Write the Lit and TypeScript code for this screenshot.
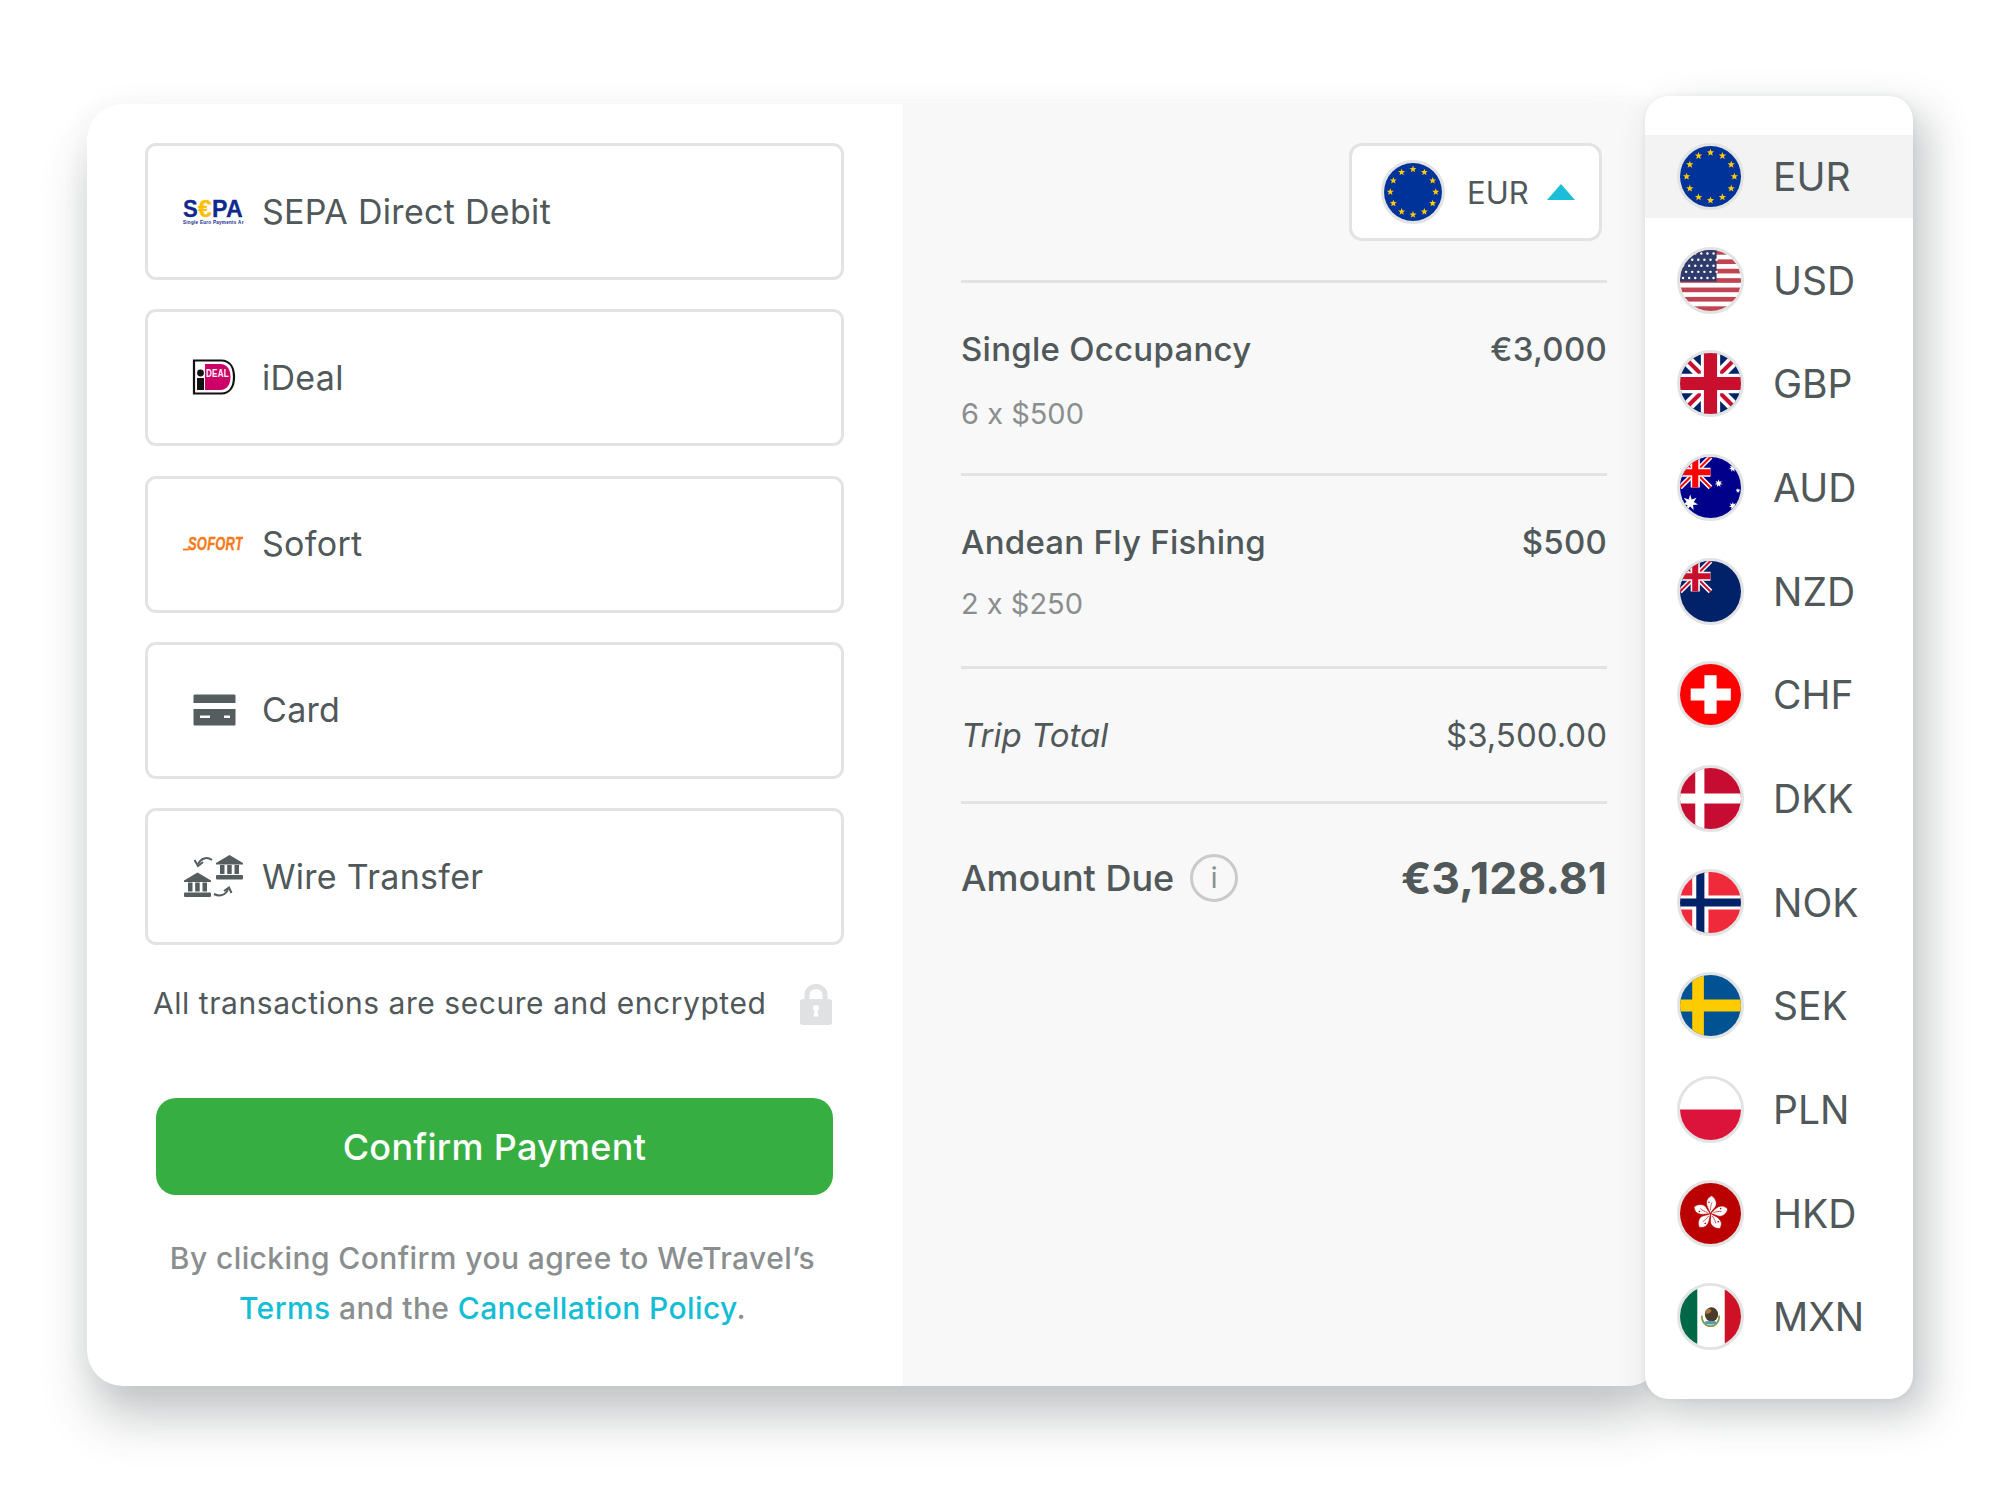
import { LitElement, css, html, svg } from "lit";
import { customElement, property } from "lit/decorators.js";

const star = (cx: number, cy: number, r: number, points = 5, inner = 0.42) => {
  const pts: string[] = [];
  for (let i = 0; i < points * 2; i++) {
    const a = (Math.PI * i) / points - Math.PI / 2;
    const d = i % 2 ? r * inner : r;
    pts.push(`${(cx + d * Math.cos(a)).toFixed(2)},${(cy + d * Math.sin(a)).toFixed(2)}`);
  }
  return pts.join(" ");
};

const ukCanton = (blue: string, red: string) => svg`
  <rect width="30" height="30" fill=${blue}></rect>
  <path d="M0 0L30 30M30 0L0 30" stroke="#fff" stroke-width="5"></path>
  <path d="M0 0L30 30M30 0L0 30" stroke=${red} stroke-width="2"></path>
  <path d="M15 0V30M0 15H30" stroke="#fff" stroke-width="9"></path>
  <path d="M15 0V30M0 15H30" stroke=${red} stroke-width="6"></path>
`;

const eu = () => {
  const stars = [];
  for (let i = 0; i < 12; i++) {
    const a = (Math.PI * i) / 6;
    stars.push(svg`<polygon points=${star(30 + 23.5 * Math.sin(a), 30 - 23.5 * Math.cos(a), 3.8)} fill="#ffcc00"></polygon>`);
  }
  return svg`<rect width="60" height="60" fill="#003399"></rect>${stars}`;
};

const us = () => {
  const stripes = [];
  for (let i = 0; i < 7; i++) {
    stripes.push(svg`<rect y=${i * 9.23} width="60" height="4.6" fill="#bf4553"></rect>`);
  }
  const dots = [];
  for (let r = 0; r < 5; r++) {
    for (let c = 0; c < 6; c++) {
      dots.push(svg`<circle cx=${3 + c * 6 + (r % 2 ? 3 : 0)} cy=${3.5 + r * 6} r="1.2" fill="#fff"></circle>`);
    }
  }
  return svg`<rect width="60" height="60" fill="#fff"></rect>${stripes}
    <rect width="36" height="31" fill="#2f3a6d"></rect>${dots}`;
};

const gb = () => svg`
  <rect width="60" height="60" fill="#012169"></rect>
  <path d="M0 0L60 60M60 0L0 60" stroke="#fff" stroke-width="11"></path>
  <path d="M0 0L60 60M60 0L0 60" stroke="#c8102e" stroke-width="4"></path>
  <path d="M30 0V60M0 30H60" stroke="#fff" stroke-width="19"></path>
  <path d="M30 0V60M0 30H60" stroke="#c8102e" stroke-width="13"></path>
`;

const au = () => svg`
  <rect width="60" height="60" fill="#00008b"></rect>
  ${ukCanton("#00008b", "#ff0000")}
  <polygon points=${star(10, 45, 8, 7, 0.45)} fill="#fff"></polygon>
  <polygon points=${star(38, 26, 4, 7, 0.45)} fill="#fff"></polygon>
  <polygon points=${star(52, 11, 4, 7, 0.45)} fill="#fff"></polygon>
  <polygon points=${star(57, 33, 2.5, 7, 0.45)} fill="#fff"></polygon>
  <polygon points=${star(52, 48, 4, 7, 0.45)} fill="#fff"></polygon>
`;

const nz = () => svg`
  <rect width="60" height="60" fill="#012169"></rect>
  ${ukCanton("#012169", "#c8102e")}
`;

const ch = () => svg`
  <rect width="60" height="60" fill="#ff0000"></rect>
  <path d="M24 11H36V24H50V36H36V49H24V36H10.5V24H24Z" fill="#fff"></path>
`;

const dk = () => svg`
  <rect width="60" height="60" fill="#c60c30"></rect>
  <path d="M15 0H24V25H60V35H24V60H15V35H0V25H15Z" fill="#fff"></path>
`;

const no = () => svg`
  <rect width="60" height="60" fill="#ef2b3b"></rect>
  <path d="M12 0H28V23H60V37H28V60H12V37H0V23H12Z" fill="#fff"></path>
  <path d="M16 0H24V26H60V34H24V60H16V34H0V26H16Z" fill="#012169"></path>
`;

const se = () => svg`
  <rect width="60" height="60" fill="#005293"></rect>
  <path d="M12 0H23.5V24H60V36H23.5V60H12V36H0V24H12Z" fill="#fecb00"></path>
`;

const pl = () => svg`
  <rect width="60" height="60" fill="#fff"></rect>
  <rect y="30" width="60" height="30" fill="#dc143c"></rect>
`;

const hk = () => {
  const petals = [];
  for (let i = 0; i < 5; i++) {
    petals.push(svg`<g transform="rotate(${i * 72} 30 30)">
      <path d="M30 30C28.500 26 25 22 26.500 17C27.200 14.700 29.500 13.500 31 12.500C34.500 14.500 36.500 18.500 35.500 22C34.500 25 32 26 30 30Z" fill="#fff" stroke="#ba0000" stroke-width=".6"></path>
      <path d="M30 27C30 24 30.500 21 31.500 19" stroke="#ba0000" stroke-width=".6" fill="none"></path>
      <circle cx="28.500" cy="19" r=".8" fill="#ba0000"></circle>
    </g>`);
  }
  return svg`<rect width="60" height="60" fill="#ba0000"></rect>${petals}`;
};

const mx = () => svg`
  <rect width="60" height="60" fill="#fff"></rect>
  <rect width="17" height="60" fill="#006847"></rect>
  <rect x="44" width="16" height="60" fill="#ce1126"></rect>
  <path d="M21.500 29C21 35 25 39.500 30 39.500C35 39.500 39 35 38.500 29" fill="none" stroke="#8a9a4a" stroke-width="1.600"></path>
  <ellipse cx="31" cy="28" rx="6.500" ry="7" fill="#4a3a2a"></ellipse>
  <path d="M25 24C27 22 30 22 31 24C30 27 27 28 25 27Z" fill="#a8773a"></path>
  <ellipse cx="30" cy="36" rx="6" ry="1.800" fill="#4f9fb0"></ellipse>
`;

const flags: Record<string, () => unknown> = {
  EUR: eu, USD: us, GBP: gb, AUD: au, NZD: nz, CHF: ch,
  DKK: dk, NOK: no, SEK: se, PLN: pl, HKD: hk, MXN: mx,
};

@customElement("app-flag")
export class AppFlag extends LitElement {
  static styles = css`
    :host {
      display: block;
      flex: none;
      width: 67px;
      height: 67px;
    }
    :host([small]) {
      width: 64px;
      height: 64px;
    }
    svg {
      display: block;
      width: 100%;
      height: 100%;
      box-sizing: border-box;
      border: 3px solid #e2e3e3;
      border-radius: 50%;
    }
  `;

  @property({ type: String })
  code = "EUR";

  render() {
    return html`<svg viewBox="0 0 60 60">${flags[this.code]()}</svg>`;
  }
}

const sepaLogo = html`<svg class="logo sepa" width="62" height="34" viewBox="-1 -6 62 34">
  <g font-family="Liberation Sans" font-weight="700" font-size="24" stroke-width=".3">
    <text x="0" y="17" fill="#10298e" stroke="#10298e" textLength="15" lengthAdjust="spacingAndGlyphs">S</text>
    <text x="15" y="17" fill="#ffbe00" stroke="#ffbe00" textLength="14" lengthAdjust="spacingAndGlyphs">€</text>
    <text x="29" y="17" fill="#10298e" stroke="#10298e" textLength="31" lengthAdjust="spacingAndGlyphs">PA</text>
  </g>
  <text transform="translate(0 23.5) scale(.915 1)" font-family="Liberation Sans" font-weight="700" font-size="5" fill="#10298e">Single Euro Payments Area</text>
</svg>`;

const idealLogo = html`<svg class="logo" width="60" height="36" viewBox="0 0 60 36">
  <path d="M11 1.500H38C48 1.500 51 10 51 18C51 26 48 34.500 38 34.500H11Z" fill="#fff" stroke="#111" stroke-width="2.200"></path>
  <path d="M22 5H37C45 5 47.500 12 47.500 18C47.500 24 45 31 37 31H22Z" fill="#cc0066"></path>
  <circle cx="17.500" cy="14" r="3.400" fill="#111"></circle>
  <rect x="14" y="19" width="7" height="12" fill="#111"></rect>
  <text x="23" y="17.500" font-family="Liberation Sans" font-weight="700" font-size="10.500" fill="#fff" textLength="23" lengthAdjust="spacingAndGlyphs">DEAL</text>
</svg>`;

const sofortLogo = html`<svg class="logo" width="60" height="24" viewBox="0 -4 60 24">
  <text transform="translate(5 14) scale(.72 1)" font-family="Liberation Sans" font-style="italic" font-weight="700" font-size="18" fill="#f47a1c" stroke="#f47a1c" stroke-width=".4">SOFORT</text>
  <path d="M0 13.500H6" stroke="#f47a1c" stroke-width="1.800"></path>
</svg>`;

const cardIcon = html`<svg class="logo" width="60" height="32" viewBox="0 0 60 32">
  <path d="M10.500 2C10.500 1 11 .5 12 .5H51C52 .5 52.500 1 52.500 2V9H10.500Z" fill="#555d5f"></path>
  <path d="M10.500 15H52.500V30C52.500 31 52 31.500 51 31.500H12C11 31.500 10.500 31 10.500 30Z" fill="#555d5f"></path>
  <rect x="17" y="21.500" width="10" height="2.500" fill="#fff"></rect>
  <rect x="41" y="21.500" width="6" height="2.500" fill="#fff"></rect>
</svg>`;

const bank = (x: number, y: number) => svg`
  <path d="M${x} ${y + 8}L${x + 13.5} ${y}L${x + 27} ${y + 8}V${y + 9.5}H${x}Z" fill="#555d5f"></path>
  <rect x=${x + 4} y=${y + 10} width="4.500" height="9" fill="#555d5f"></rect>
  <rect x=${x + 11.2} y=${y + 10} width="4.500" height="9" fill="#555d5f"></rect>
  <rect x=${x + 18.5} y=${y + 10} width="4.500" height="9" fill="#555d5f"></rect>
  <rect x=${x} y=${y + 20} width="27" height="4.500" rx="1" fill="#555d5f"></rect>
`;

const wireIcon = html`<svg class="logo" width="60" height="43" viewBox="0 0 60 43">
  ${bank(33, 0)}${bank(1, 17.5)}
  <path d="M29 5C24 1.500 18 3 15 9" fill="none" stroke="#555d5f" stroke-width="2"></path>
  <path d="M11.500 5L15 11L20 7" fill="none" stroke="#555d5f" stroke-width="2"></path>
  <path d="M31 39C37 42 43 40 45 34" fill="none" stroke="#555d5f" stroke-width="2"></path>
  <path d="M41 36L46 32.500L48.500 38" fill="none" stroke="#555d5f" stroke-width="2"></path>
</svg>`;

const lockIcon = html`<svg class="lock" width="32" height="41" viewBox="0 0 32 41">
  <path d="M7 18V11C7 6 11 2.500 16 2.500C21 2.500 25 6 25 11V18" fill="none" stroke="#dfe1e3" stroke-width="5"></path>
  <rect y="15" width="32" height="26" rx="3" fill="#dfe1e3"></rect>
  <circle cx="16" cy="24" r="3" fill="#fff"></circle>
  <path d="M14.800 25H17.200L18.500 32.500H13.500Z" fill="#fff"></path>
</svg>`;

const methods = [
  { label: "SEPA Direct Debit", logo: sepaLogo },
  { label: "iDeal", logo: idealLogo },
  { label: "Sofort", logo: sofortLogo },
  { label: "Card", logo: cardIcon },
  { label: "Wire Transfer", logo: wireIcon },
];

const currencies = ["EUR", "USD", "GBP", "AUD", "NZD", "CHF", "DKK", "NOK", "SEK", "PLN", "HKD", "MXN"];

@customElement("app-root")
export class AppRoot extends LitElement {
  static styles = css`
    :host {
      display: block;
      width: 2000px;
      height: 1494px;
      font-family: Inter, "Liberation Sans", sans-serif;
      color: #50585a;
    }
    .page {
      position: relative;
      box-sizing: border-box;
      width: 2000px;
      height: 1494px;
      padding: 104px 0 0 87px;
      background: #fff;
    }
    .card {
      display: flex;
      width: 1576px;
      height: 1282px;
      border-radius: 36px;
      background: #fff;
      box-shadow: 0 36px 50px -6px rgba(55, 62, 66, 0.3), 0 0 30px rgba(55, 62, 66, 0.05);
      overflow: hidden;
    }
    .pay {
      box-sizing: border-box;
      flex: none;
      width: 816px;
      padding: 39px 59px 0 58px;
    }
    .methods {
      display: flex;
      flex-direction: column;
      gap: 29.25px;
    }
    .method {
      display: flex;
      align-items: center;
      gap: 19px;
      box-sizing: border-box;
      height: 137px;
      padding: 0 0 1px 35px;
      border: 3px solid #e2e3e3;
      border-radius: 11px;
      font-size: 34px;
      letter-spacing: 0.3px;
    }
    .logo {
      display: block;
      flex: none;
    }
    .logo.sepa {
      margin: 0 -1px;
    }
    .secure {
      display: flex;
      align-items: center;
      justify-content: space-between;
      height: 50px;
      margin-top: 33px;
      padding: 0 12px 0 8px;
      font-size: 30px;
      letter-spacing: 0.55px;
    }
    .lock {
      display: block;
      margin-top: 3px;
    }
    button {
      display: block;
      width: 677px;
      height: 97px;
      margin: 70px 0 0 11px;
      border: 0;
      border-radius: 20px;
      background: #36ae41;
      color: #fff;
      font: 500 36px Inter, "Liberation Sans", sans-serif;
      letter-spacing: 0.3px;
    }
    .terms {
      margin: 38px 1px 0 -3px;
      font-size: 30px;
      font-weight: 500;
      letter-spacing: 0.4px;
      line-height: 50px;
      text-align: center;
      color: #8b8e8f;
    }
    .terms a {
      color: #14bdd6;
      text-decoration: none;
    }
    .summary {
      box-sizing: border-box;
      flex: 1;
      padding: 39px 56px 0 58px;
      background: #f8f8f8;
    }
    .select {
      display: flex;
      align-items: center;
      box-sizing: border-box;
      width: 253px;
      height: 98px;
      margin: 0 5px 39px auto;
      padding-left: 29px;
      border: 3px solid #e2e3e3;
      border-radius: 13px;
      background: #fff;
      font-size: 31px;
    }
    .select span {
      margin: 0 18px 0 22px;
    }
    .arrow {
      display: block;
    }
    .line {
      box-sizing: border-box;
      height: 193px;
      padding-top: 41px;
      border-top: 3px solid #e2e3e3;
    }
    .row {
      display: flex;
      justify-content: space-between;
      align-items: center;
      height: 50px;
      font-size: 33px;
      font-weight: 500;
      letter-spacing: 0.25px;
    }
    .sub {
      margin-top: 15px;
      font-size: 29px;
      line-height: 50px;
      color: #8b8e8f;
    }
    .line + .line .sub {
      margin-top: 12px;
    }
    .total {
      height: 135px;
    }
    .total .row {
      font-weight: 400;
      letter-spacing: 0;
    }
    .total .row span:first-child {
      font-style: italic;
    }
    .due {
      padding-top: 49px;
      border-top: 3px solid #e2e3e3;
    }
    .due .row {
      height: 50px;
      font-size: 36px;
      letter-spacing: 0;
    }
    .label {
      display: flex;
      align-items: center;
      gap: 16px;
    }
    .info {
      display: flex;
      align-items: center;
      justify-content: center;
      box-sizing: border-box;
      width: 48px;
      height: 48px;
      border: 3px solid #c9cbcb;
      border-radius: 50%;
      color: #8b8e8f;
      font-size: 28px;
      font-weight: 400;
    }
    .amount {
      font-size: 44.5px;
      font-weight: 700;
    }
    .menu {
      position: absolute;
      top: 96px;
      left: 1645px;
      box-sizing: border-box;
      display: flex;
      flex-direction: column;
      gap: 20.67px;
      width: 268px;
      height: 1303px;
      padding: 39px 0 0;
      border-radius: 24px;
      background: #fff;
      box-shadow: 16px 16px 40px rgba(55, 62, 66, 0.28), 0 0 6px rgba(55, 62, 66, 0.08);
    }
    .option {
      display: flex;
      align-items: center;
      gap: 29px;
      height: 83px;
      padding-left: 32px;
      font-size: 39px;
    }
    .option.active {
      background: #f3f3f3;
    }
  `;

  render() {
    return html`
      <div class="page">
        <div class="card">
          <section class="pay">
            <div class="methods">
              ${methods.map((m) => html`<div class="method">${m.logo}<span>${m.label}</span></div>`)}
            </div>
            <div class="secure"><span>All transactions are secure and encrypted</span>${lockIcon}</div>
            <button>Confirm Payment</button>
            <p class="terms">
              By clicking Confirm you agree to WeTravel’s<br />
              <a href="#">Terms</a> and the <a href="#">Cancellation Policy</a>.
            </p>
          </section>
          <section class="summary">
            <div class="select">
              <app-flag code="EUR" small></app-flag>
              <span>EUR</span>
              <svg class="arrow" width="28" height="16" viewBox="0 0 28 16"><polygon points="14,0 28,16 0,16" fill="#1cbdd6"></polygon></svg>
            </div>
            <div class="line">
              <div class="row"><span>Single Occupancy</span><span>€3,000</span></div>
              <div class="sub">6 x $500</div>
            </div>
            <div class="line">
              <div class="row"><span>Andean Fly Fishing</span><span>$500</span></div>
              <div class="sub">2 x $250</div>
            </div>
            <div class="line total">
              <div class="row"><span>Trip Total</span><span>$3,500.00</span></div>
            </div>
            <div class="due">
              <div class="row">
                <span class="label">Amount Due <span class="info">i</span></span>
                <span class="amount">€3,128.81</span>
              </div>
            </div>
          </section>
        </div>
        <div class="menu">
          ${currencies.map(
            (c, i) => html`<div class="option ${i === 0 ? "active" : ""}"><app-flag code=${c}></app-flag><span>${c}</span></div>`
          )}
        </div>
      </div>
    `;
  }
}
